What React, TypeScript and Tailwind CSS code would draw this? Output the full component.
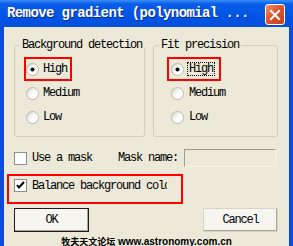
import React from 'react';

const MONO = { fontFamily: '"Liberation Mono", "DejaVu Sans Mono", monospace' };

function Radio({ checked = false }: { checked?: boolean }) {
  return (
    <svg width="13" height="13" viewBox="0 0 13 13" className="shrink-0">
      <defs>
        <linearGradient id="rg" x1="0" y1="0" x2="1" y2="1">
          <stop offset="0" stopColor="#d6d4ca" />
          <stop offset="0.55" stopColor="#ffffff" />
          <stop offset="1" stopColor="#ffffff" />
        </linearGradient>
      </defs>
      <circle cx="6.5" cy="6.5" r="6" fill="url(#rg)" stroke="#b9b7ad" strokeWidth="1" />
      {checked && <circle cx="6.5" cy="6.5" r="2" fill="#000" />}
    </svg>
  );
}

function Checkbox({ checked = false }: { checked?: boolean }) {
  return (
    <div className="w-[13px] h-[13px] shrink-0 border border-[#8e8f8f] bg-white flex items-center justify-center">
      {checked && (
        <svg width="11" height="11" viewBox="0 0 11 11">
          <path d="M2 5 L4 7.5 L9 2" fill="none" stroke="#000" strokeWidth="2" />
        </svg>
      )}
    </div>
  );
}

function Group({ title, width, children }: { title: string; width: string; children: React.ReactNode }) {
  return (
    <fieldset className={`${width} h-[98px] border border-[#d0d0bf] rounded-[3px]`}>
      <legend className="ml-[5px] px-[2px] leading-[12px] text-[12px] tracking-[-1.2px] whitespace-nowrap">{title}</legend>
      <div className="flex flex-col pt-[6px]">{children}</div>
    </fieldset>
  );
}

export default function App() {
  return (
    <div className="w-[293px] h-[246px] overflow-hidden bg-[#0b4be0] flex flex-col text-black" style={MONO}>
      {/* title bar */}
      <div className="h-[27px] shrink-0 flex bg-[linear-gradient(to_bottom,#3d8ef8_0%,#0a5ee9_14%,#0055e5_55%,#0350dc_100%)]">
        <div className="pl-[7px] pt-[5px] text-[14px] leading-[17px] font-bold tracking-[-0.6px] text-white whitespace-nowrap [text-shadow:1px_1px_0_#0a2a8a]">
          Remove gradient (polynomial ...
        </div>
        <div className="ml-auto mr-[8px] mt-[4px] w-[20px] h-[21px] rounded-[3px] border border-white bg-[linear-gradient(135deg,#f0906e_0%,#e0542f_45%,#c83e1c_100%)] flex items-center justify-center">
          <svg width="12" height="12" viewBox="0 0 12 12">
            <path d="M2 2 L10 10 M10 2 L2 10" stroke="#fff" strokeWidth="2" strokeLinecap="square" />
          </svg>
        </div>
      </div>

      {/* body */}
      <div className="flex-1 mx-[4px] bg-[#ece9d8] flex flex-col text-[12px] tracking-[-1.2px]">
        <div className="flex gap-[8px] pt-[12px] pl-[10px]">
          <Group title="Background detection" width="w-[130px]">
            <div className="ml-[9px] w-[48px] h-[24px] border-2 border-[#ff0000] flex items-center gap-[4px]">
              <Radio checked />
              <span>High</span>
            </div>
            <div className="pl-[11px] h-[24px] flex items-center gap-[4px]">
              <Radio />
              <span>Medium</span>
            </div>
            <div className="pl-[11px] h-[24px] flex items-center gap-[4px]">
              <Radio />
              <span>Low</span>
            </div>
          </Group>
          <Group title="Fit precision" width="w-[125px]">
            <div className="ml-[13px] w-[54px] h-[24px] border-2 border-[#ff0000] pl-[2px] flex items-center gap-[3px]">
              <Radio checked />
              <span className="border border-dotted border-black px-[1px] leading-[12px]">High</span>
            </div>
            <div className="pl-[17px] h-[24px] flex items-center gap-[5px]">
              <Radio />
              <span>Medium</span>
            </div>
            <div className="pl-[17px] h-[24px] flex items-center gap-[5px]">
              <Radio />
              <span>Low</span>
            </div>
          </Group>
        </div>

        <div className="mt-[12px] h-[18px] flex items-center pl-[10px]">
          <Checkbox />
          <span className="ml-[5px] w-[86px]">Use a mask</span>
          <span className="w-[66px]">Mask name:</span>
          <div className="w-[92px] h-[18px] border border-t-[#9c9a8f] border-l-[#9c9a8f] border-r-[#f4f3ee] border-b-[#f4f3ee]" />
        </div>

        <div className="mt-[7px] ml-[3px] w-[176px] h-[30px] border-2 border-[#ff0000] pl-[5px] pt-[3px] flex items-start">
          <div className="flex items-center h-[13px]">
            <Checkbox checked />
            <span className="ml-[5px] w-[135px] overflow-hidden whitespace-nowrap">Balance background colors</span>
          </div>
        </div>

        <div className="mt-[4px] flex justify-between pl-[10px] pr-[11px]">
          <button className="w-[75px] h-[24px] border border-[#1b1b1b] bg-[#f6f5f0] shadow-[inset_-1px_-1px_0_#a8a598] text-[12px] tracking-[-1.2px]">
            OK
          </button>
          <button className="w-[75px] h-[24px] border border-[#d8d5c8] bg-[#f6f5f0] shadow-[inset_-1px_-1px_0_#a8a598] text-[12px] tracking-[-1.2px]">
            Cancel
          </button>
        </div>

        <div
          className="mt-[3px] text-center text-[10px] leading-[13px] font-bold tracking-normal whitespace-nowrap"
          style={{ fontFamily: '"Liberation Sans", "Noto Sans CJK SC", sans-serif' }}
        >
          <span className="text-[9px]">牧夫天文论坛</span> www.astronomy.com.cn
        </div>
      </div>
    </div>
  );
}
